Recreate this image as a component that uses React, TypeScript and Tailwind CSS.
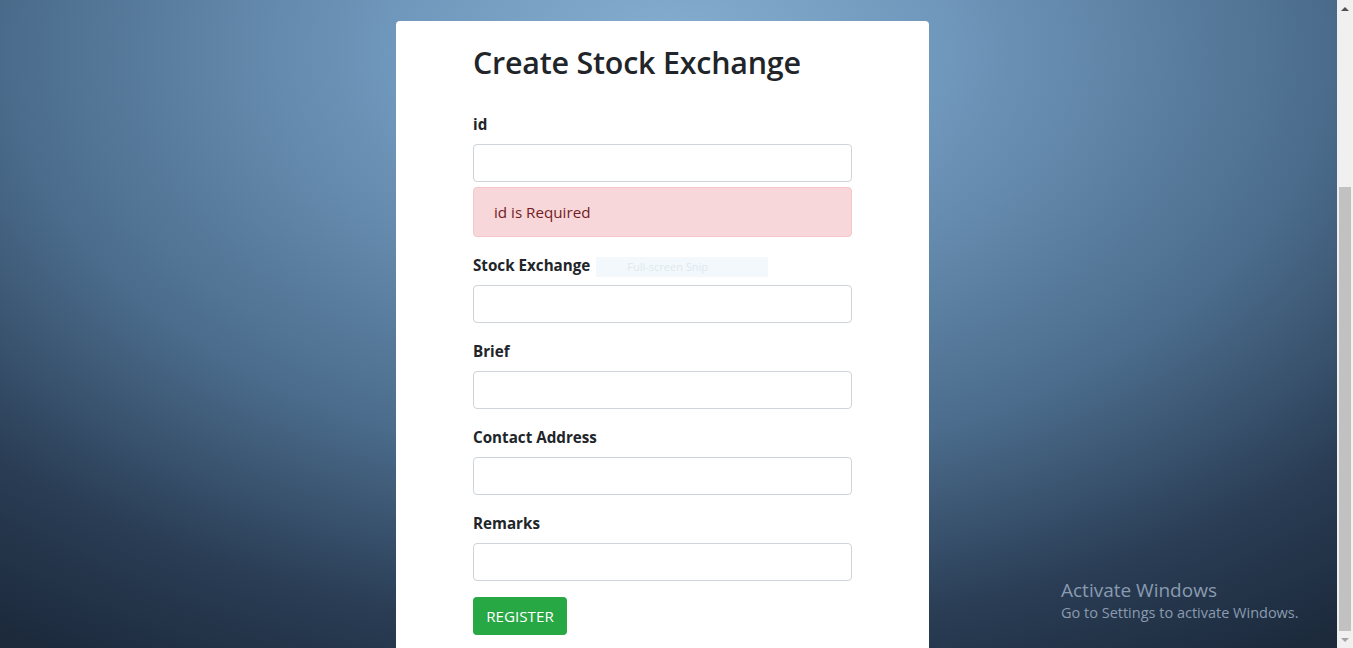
import React from "react";

const fields = ["Stock Exchange", "Brief", "Contact Address", "Remarks"];

function Field({ label, extra }: { label: string; extra?: React.ReactNode }) {
  return (
    <div className="mt-4">
      <div className="flex items-center h-6 mb-2">
        <label className="text-[15.2px] leading-6 font-bold text-[#212529]">{label}</label>
        {extra}
      </div>
      <input className="block w-[379px] h-[38px] rounded border border-[#ced4da] bg-white px-3 outline-none" />
    </div>
  );
}

export default function App() {
  return (
    <div
      className="relative flex h-[648px] w-full overflow-hidden"
      style={{ fontFamily: '"Open Sans", "Noto Sans", sans-serif' }}
    >
      <main className="flex flex-1 justify-center bg-[radial-gradient(ellipse_85%_110%_at_50%_8%,#85aed0_0%,#6f97bb_25%,#4b6c8c_58%,#2a3d55_82%,#1c2a3c_100%)]">
        <div className="mt-[21px] mr-[12px] w-[533px] rounded-t bg-white pl-[77px]">
          <h2 className="mt-[23px] text-[30.4px] leading-[38px] font-semibold text-[#212529] tracking-[-0.2px]">
            Create Stock Exchange
          </h2>
          <div className="mt-[30px]">
            <div className="flex items-center h-6 mb-2">
              <label className="text-[15.2px] leading-6 font-bold text-[#212529]">id</label>
            </div>
            <input className="block w-[379px] h-[38px] rounded border border-[#ced4da] bg-white px-3 outline-none" />
            <div className="mt-[5px] w-[379px] h-[50px] rounded border border-[#f5c6cb] bg-[#f8d7da] pl-[20px] flex items-center text-[15.2px] text-[#721c24]">
              id is Required
            </div>
          </div>
          {fields.map((f, i) => (
            <Field
              key={f}
              label={f}
              extra={
                i === 0 ? (
                  <span className="ml-[6px] mt-[4px] w-[172px] h-[20px] bg-[#f3f8fc] text-[11px] leading-5 text-[#dfe8ef] pl-[31px]">
                    Full-screen Snip
                  </span>
                ) : undefined
              }
            />
          ))}
          <button className="mt-4 h-[38px] w-[94px] rounded bg-[#28a745] text-[15.2px] text-white">
            REGISTER
          </button>
        </div>
      </main>
      <div className="flex w-[16px] flex-col bg-[#f0f0f0]">
        <div className="flex h-[17px] items-center justify-center">
          <span className="block h-0 w-0 border-x-[4px] border-b-[4px] border-x-transparent border-b-[#505050]" />
        </div>
        <div className="mt-[170px] mx-[2px] flex-1 bg-[#c1c1c1]" />
        <div className="flex h-[17px] items-center justify-center">
          <span className="block h-0 w-0 border-x-[4px] border-t-[4px] border-x-transparent border-t-[#a3a3a3]" />
        </div>
      </div>
      <div className="absolute left-[1061px] top-[578px] text-[#8a9bb0]">
        <div className="text-[19px] leading-6">Activate Windows</div>
        <div className="text-[14.5px] leading-5 mt-[1px]">Go to Settings to activate Windows.</div>
      </div>
    </div>
  );
}
